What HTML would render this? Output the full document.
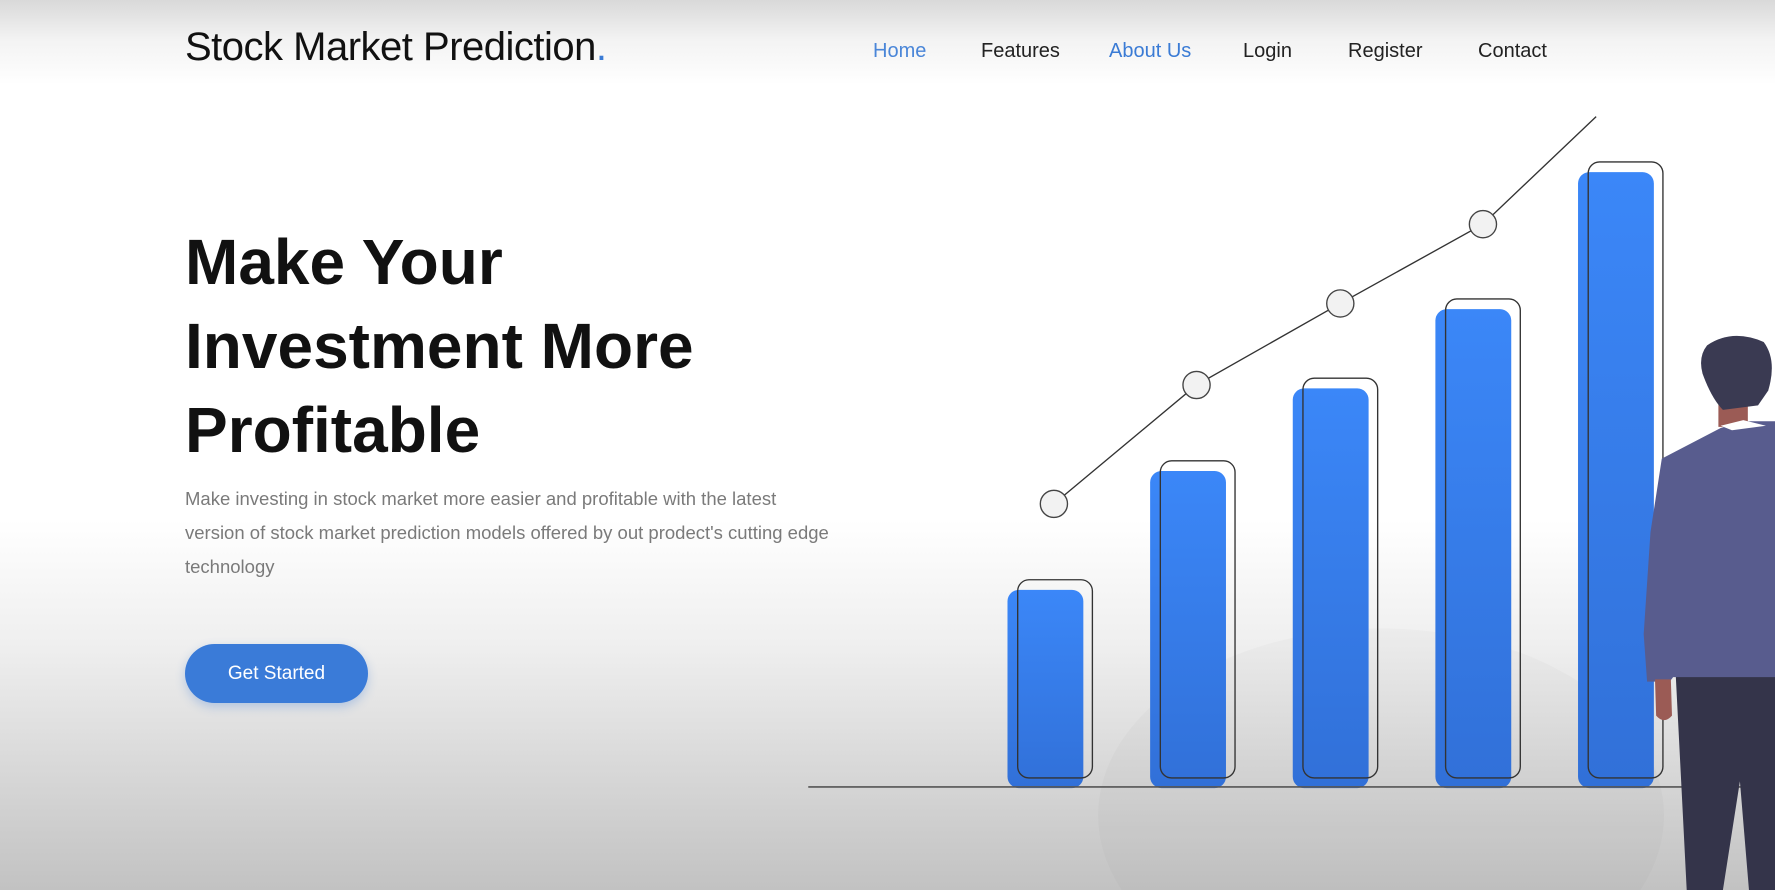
<!DOCTYPE html>
<html><head><meta charset="utf-8"><style>
*{margin:0;padding:0;box-sizing:border-box}
html,body{width:1775px;height:890px;overflow:hidden}
body{position:relative;font-family:"Liberation Sans",sans-serif;
background:linear-gradient(180deg,#d9d9d9 0px,#f3f3f3 40px,#ffffff 85px,#ffffff 520px,#eeeeee 650px,#d6d6d6 780px,#c2c2c2 890px);}
svg.art{position:absolute;left:0;top:0}
.logo{position:absolute;left:185px;top:25px;font-size:40px;color:#111;letter-spacing:-0.5px}
.logo span{color:#3a7bd5}
.nav a{position:absolute;top:40px;font-size:20px;color:#222;text-decoration:none}
h1{position:absolute;left:185px;top:220px;font-size:64px;line-height:84px;font-weight:bold;color:#111}
p{position:absolute;left:185px;top:482px;width:650px;font-size:18.5px;line-height:34px;color:#7a7a7a}
.btn{position:absolute;left:185px;top:644px;width:183px;height:59px;border-radius:30px;background:#3a7bd8;color:#fff;font-size:19px;text-align:center;line-height:59px;box-shadow:0 4px 10px rgba(58,123,216,.3)}
</style></head><body>
<svg class="art" width="1775" height="890" viewBox="0 0 1568 786" preserveAspectRatio="none">
<defs><linearGradient id="g" x1="0" y1="0" x2="0" y2="1"><stop offset="0" stop-color="#3b87f8"/><stop offset="1" stop-color="#3170d8"/></linearGradient></defs>
<ellipse cx="1220" cy="720" rx="250" ry="165" fill="#000" opacity="0.02"/>
<g fill="url(#g)">
<rect x="890" y="521" width="67" height="175" rx="10"/>
<rect x="1016" y="416" width="67" height="280" rx="10"/>
<rect x="1142" y="343" width="67" height="353" rx="10"/>
<rect x="1268" y="273" width="67" height="423" rx="10"/>
<rect x="1394" y="152" width="67" height="544" rx="10"/>
</g>
<g fill="none" stroke="#333" stroke-width="1.2">
<rect x="899" y="512" width="66" height="175" rx="10"/>
<rect x="1025" y="407" width="66" height="280" rx="10"/>
<rect x="1151" y="334" width="66" height="353" rx="10"/>
<rect x="1277" y="264" width="66" height="423" rx="10"/>
<rect x="1403" y="143" width="66" height="544" rx="10"/>
<polyline points="931,445 1057,340 1184,268 1310,198 1410,103"/>
</g>
<g fill="#f2f2f2" stroke="#444" stroke-width="1.2">
<circle cx="931" cy="445" r="12"/><circle cx="1057" cy="340" r="12"/><circle cx="1184" cy="268" r="12"/><circle cx="1310" cy="198" r="12"/>
</g>
<line x1="714" y1="695" x2="1540" y2="695" stroke="#555" stroke-width="1.5"/>
<!-- person -->
<path d="M1480,590 L1568,590 L1568,786 L1545,786 L1537,690 L1522,786 L1490,786 Z" fill="#34344a"/>
<rect x="1518" y="345" width="26" height="32" fill="#9b5b55"/>
<path d="M1468,405 L1520,378 L1540,372 L1568,372 L1568,598 L1478,598 L1475,602 L1455,602 L1452,560 L1458,470 Z" fill="#585c8e"/>
<path d="M1462,600 L1476,600 L1477,632 Q1470,640 1463,632 Z" fill="#9b5b55"/>
<path d="M1520,376 L1540,371 L1560,376 L1530,380 Z" fill="#fff"/>
<path d="M1508,305 Q1530,290 1558,302 Q1570,318 1562,345 L1553,358 L1522,362 Q1512,352 1504,330 Q1500,315 1508,305 Z" fill="#3a3a52"/>
</svg>
<div class="logo">Stock Market Prediction<span>.</span></div>
<div class="nav">
<a style="left:873px;color:#4a86d8">Home</a>
<a style="left:981px">Features</a>
<a style="left:1109px;color:#3a7bd5">About Us</a>
<a style="left:1243px">Login</a>
<a style="left:1348px">Register</a>
<a style="left:1478px">Contact</a>
</div>
<h1>Make Your<br>Investment More<br>Profitable</h1>
<p>Make investing in stock market more easier and profitable with the latest version of stock market prediction models offered by out prodect's cutting edge technology</p>
<div class="btn">Get Started</div>
</body></html>
